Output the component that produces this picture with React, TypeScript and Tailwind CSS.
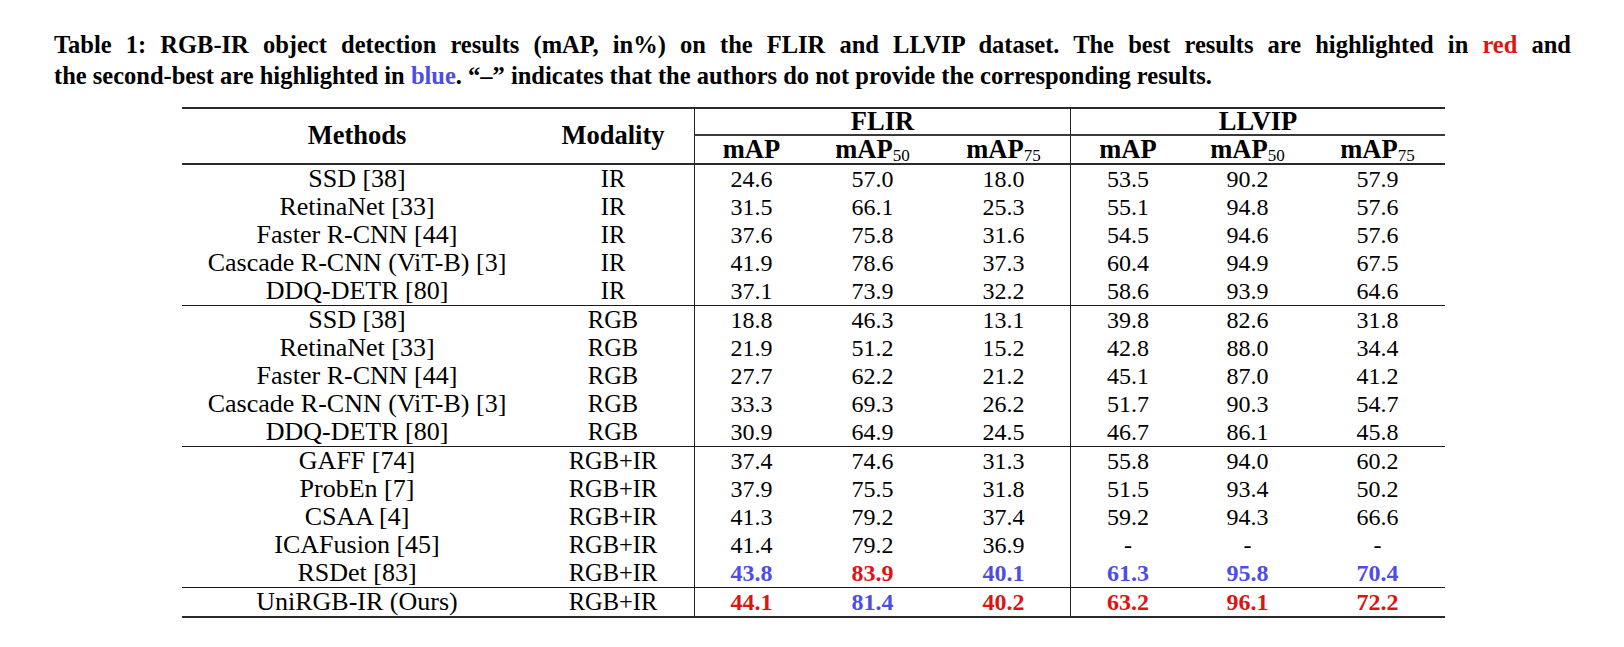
import React from "react";

type Mark = "r" | "b" | undefined;
type Cell = { v: string; m?: Mark };

interface Row {
  method: string;
  modality: string;
  vals: Cell[];
}

const c = (v: string, m?: Mark): Cell => ({ v, m });
const plain = (...vals: string[]) => vals.map((v) => c(v));

const groups: Row[][] = [
  [
    { method: "SSD [38]", modality: "IR", vals: plain("24.6", "57.0", "18.0", "53.5", "90.2", "57.9") },
    { method: "RetinaNet [33]", modality: "IR", vals: plain("31.5", "66.1", "25.3", "55.1", "94.8", "57.6") },
    { method: "Faster R-CNN [44]", modality: "IR", vals: plain("37.6", "75.8", "31.6", "54.5", "94.6", "57.6") },
    { method: "Cascade R-CNN (ViT-B) [3]", modality: "IR", vals: plain("41.9", "78.6", "37.3", "60.4", "94.9", "67.5") },
    { method: "DDQ-DETR [80]", modality: "IR", vals: plain("37.1", "73.9", "32.2", "58.6", "93.9", "64.6") },
  ],
  [
    { method: "SSD [38]", modality: "RGB", vals: plain("18.8", "46.3", "13.1", "39.8", "82.6", "31.8") },
    { method: "RetinaNet [33]", modality: "RGB", vals: plain("21.9", "51.2", "15.2", "42.8", "88.0", "34.4") },
    { method: "Faster R-CNN [44]", modality: "RGB", vals: plain("27.7", "62.2", "21.2", "45.1", "87.0", "41.2") },
    { method: "Cascade R-CNN (ViT-B) [3]", modality: "RGB", vals: plain("33.3", "69.3", "26.2", "51.7", "90.3", "54.7") },
    { method: "DDQ-DETR [80]", modality: "RGB", vals: plain("30.9", "64.9", "24.5", "46.7", "86.1", "45.8") },
  ],
  [
    { method: "GAFF [74]", modality: "RGB+IR", vals: plain("37.4", "74.6", "31.3", "55.8", "94.0", "60.2") },
    { method: "ProbEn [7]", modality: "RGB+IR", vals: plain("37.9", "75.5", "31.8", "51.5", "93.4", "50.2") },
    { method: "CSAA [4]", modality: "RGB+IR", vals: plain("41.3", "79.2", "37.4", "59.2", "94.3", "66.6") },
    { method: "ICAFusion [45]", modality: "RGB+IR", vals: plain("41.4", "79.2", "36.9", "-", "-", "-") },
    {
      method: "RSDet [83]",
      modality: "RGB+IR",
      vals: [c("43.8", "b"), c("83.9", "r"), c("40.1", "b"), c("61.3", "b"), c("95.8", "b"), c("70.4", "b")],
    },
  ],
  [
    {
      method: "UniRGB-IR (Ours)",
      modality: "RGB+IR",
      vals: [c("44.1", "r"), c("81.4", "b"), c("40.2", "r"), c("63.2", "r"), c("96.1", "r"), c("72.2", "r")],
    },
  ],
];

const grid =
  "grid grid-cols-[350px_162px_114px_129px_133px_115px_125px_135px]";

function MapHead({ sub }: { sub?: string }) {
  return (
    <span className="font-bold whitespace-nowrap">
      mAP
      {sub && <span className="relative top-[3px] text-[17px] font-normal">{sub}</span>}
    </span>
  );
}

function valueClass(m: Mark) {
  if (m === "r") return "text-[#dc1414] font-bold";
  if (m === "b") return "text-[#4d4de6] font-bold";
  return "text-black";
}

export default function App() {
  return (
    <div
      className="w-[1624px] h-[647px] bg-white text-black"
      style={{ fontFamily: '"Liberation Serif", "Times New Roman", serif' }}
    >
      {/* caption, first line justified like the LaTeX original */}
      <div className="pt-[29px] pl-[54px] text-[24.5px] leading-[31px] font-bold whitespace-nowrap">
        <div className="w-[1517px] text-justify [text-align-last:justify]">
          Table 1: RGB-IR object detection results (mAP, in%) on the FLIR and LLVIP dataset. The best results are
          highlighted in <span className="text-[#dc1414]">red</span> and
        </div>
        <div>
          the second-best are highlighted in <span className="text-[#4d4de6]">blue</span>. “–” indicates that the
          authors do not provide the corresponding results.
        </div>
      </div>

      {/* table */}
      <div className="ml-[182px] mt-[16px] w-[1263px] text-[24px]">
        <div className="h-[2px] bg-[#2a2a2a]" />

        {/* header */}
        <div className={`${grid} grid-rows-[27px_27px] font-bold text-[26.5px]`}>
          <div className="row-span-2 flex items-center justify-center">Methods</div>
          <div className="row-span-2 flex items-center justify-center">Modality</div>
          <div className="col-span-3 border-l border-b-2 border-l-[#222] border-b-[#3a3a3a] flex items-center justify-center leading-none">
            FLIR
          </div>
          <div className="col-span-3 border-l border-b-2 border-l-[#222] border-b-[#3a3a3a] flex items-center justify-center leading-none">
            LLVIP
          </div>
          <div className="border-l border-l-[#222] flex items-center justify-center leading-none">
            <MapHead />
          </div>
          <div className="flex items-center justify-center leading-none">
            <MapHead sub="50" />
          </div>
          <div className="flex items-center justify-center leading-none">
            <MapHead sub="75" />
          </div>
          <div className="border-l border-l-[#222] flex items-center justify-center leading-none">
            <MapHead />
          </div>
          <div className="flex items-center justify-center leading-none">
            <MapHead sub="50" />
          </div>
          <div className="flex items-center justify-center leading-none">
            <MapHead sub="75" />
          </div>
        </div>

        {groups.map((rows, gi) => (
          <div key={gi}>
            <div className={gi === 0 ? "h-[2px] bg-[#2a2a2a]" : "h-px bg-[#1a1a1a]"} />
            {rows.map((r, ri) => (
              <div key={ri} className={`${grid} h-[28px] leading-[28px]`}>
                <div className="text-center text-[26px]">{r.method}</div>
                <div className="text-center text-[24.5px]">{r.modality}</div>
                {r.vals.map((v, vi) => (
                  <div
                    key={vi}
                    className={`text-center ${vi === 0 || vi === 3 ? "border-l border-l-[#222]" : ""} ${valueClass(v.m)}`}
                  >
                    {v.v}
                  </div>
                ))}
              </div>
            ))}
          </div>
        ))}
        <div className="h-[2px] bg-[#2a2a2a]" />
      </div>
    </div>
  );
}
